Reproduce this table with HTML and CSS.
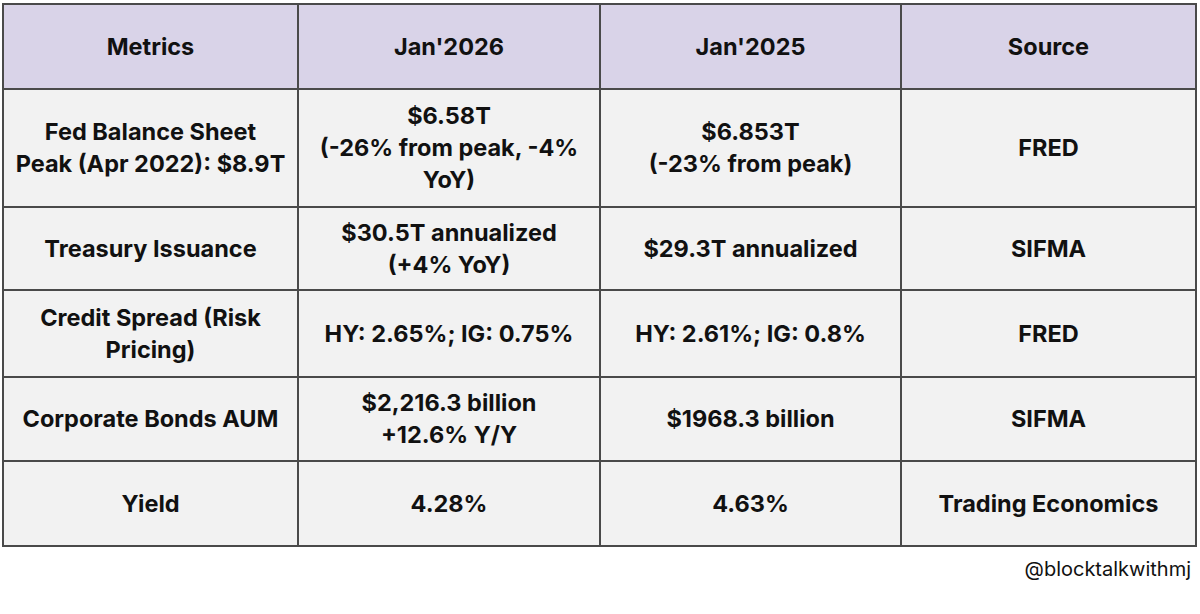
FILE: index.html
```html
<!DOCTYPE html>
<html>
<head>
<meta charset="utf-8">
<link rel="stylesheet" href="styles.css">
</head>
<body>
<div class="page">
<table class="metrics">
  <colgroup>
    <col class="c1"><col class="c2"><col class="c3"><col class="c4">
  </colgroup>
  <thead>
    <tr class="head">
      <th>Metrics</th><th>Jan'2026</th><th>Jan'2025</th><th>Source</th>
    </tr>
  </thead>
  <tbody>
    <tr class="r1">
      <td>Fed Balance Sheet<br>Peak (Apr 2022): $8.9T</td>
      <td>$6.58T<br>(-26% from peak, -4%<br>YoY)</td>
      <td>$6.853T<br>(-23% from peak)</td>
      <td>FRED</td>
    </tr>
    <tr class="r2">
      <td>Treasury Issuance</td>
      <td>$30.5T annualized<br>(+4% YoY)</td>
      <td>$29.3T annualized</td>
      <td>SIFMA</td>
    </tr>
    <tr class="r3">
      <td>Credit Spread (Risk<br>Pricing)</td>
      <td>HY: 2.65%; IG: 0.75%</td>
      <td>HY: 2.61%; IG: 0.8%</td>
      <td>FRED</td>
    </tr>
    <tr class="r4">
      <td>Corporate Bonds AUM</td>
      <td>$2,216.3 billion<br>+12.6% Y/Y</td>
      <td>$1968.3 billion</td>
      <td>SIFMA</td>
    </tr>
    <tr class="r5">
      <td>Yield</td>
      <td>4.28%</td>
      <td>4.63%</td>
      <td>Trading Economics</td>
    </tr>
  </tbody>
</table>
<div class="credit">@blocktalkwithmj</div>
</div>
</body>
</html>
```
FILE: styles.css
```css
html, body {
  margin: 0;
  padding: 0;
  background: #ffffff;
}
.page {
  width: 1200px;
  height: 614px;
  padding: 3px 5px 0 2px;
  box-sizing: border-box;
  font-family: "Inter", "Open Sans", "Liberation Sans", sans-serif;
  color: #111111;
}
.metrics {
  width: 1193px;
  border-collapse: collapse;
  table-layout: fixed;
}
.c1 { width: 295px; }
.c2 { width: 302px; }
.c3 { width: 301px; }
.c4 { width: 295px; }
.metrics th,
.metrics td {
  border: 2px solid #4a4a4a;
  text-align: center;
  vertical-align: middle;
  font-weight: 700;
  font-size: 23.5px;
  line-height: 32px;
  padding: 0 2px;
}
.metrics th {
  background: #d9d3e8;
}
.metrics td {
  background: #f2f2f2;
}
.head { height: 85px; }
.r1 { height: 118px; }
.r2 { height: 83px; }
.r3 { height: 87px; }
.r4 { height: 84px; }
.r5 { height: 85px; }
.credit {
  text-align: right;
  font-size: 20px;
  font-weight: 400;
  padding-top: 10px;
  padding-right: 4px;
  color: #111111;
}
```
